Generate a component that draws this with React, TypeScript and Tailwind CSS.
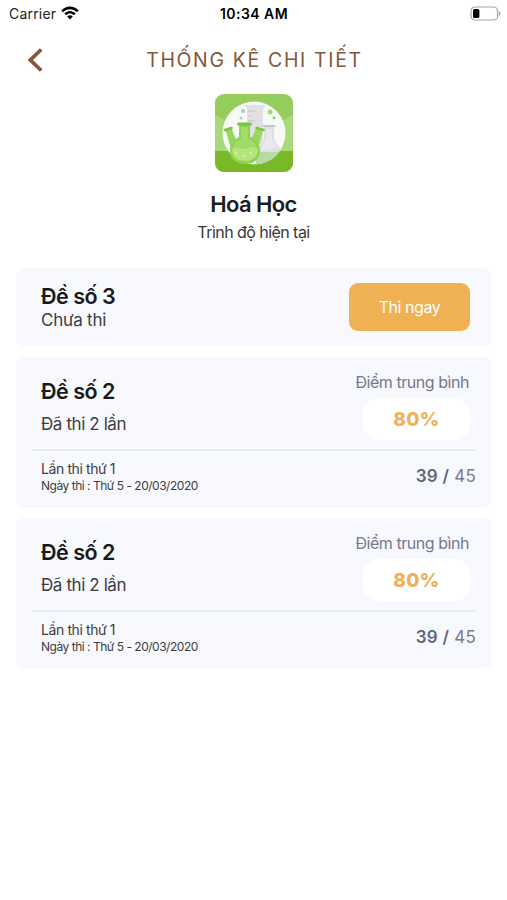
import React from 'react';

interface Attempt {
  id: number;
  name: string;
  date: string;
  score: number;
  total: number;
}

interface Exam {
  id: number;
  title: string;
  status: string;
  average?: number;
  attempts: Attempt[];
}

const attempt: Attempt = { id: 1, name: 'Lần thi thứ 1', date: 'Ngày thi : Thứ 5 - 20/03/2020', score: 39, total: 45 };

const exams: Exam[] = [
  { id: 1, title: 'Đề số 3', status: 'Chưa thi', attempts: [] },
  { id: 2, title: 'Đề số 2', status: 'Đã thi 2 lần', average: 80, attempts: [attempt] },
  { id: 3, title: 'Đề số 2', status: 'Đã thi 2 lần', average: 80, attempts: [attempt] },
];

function StatusBar() {
  return (
    <div className="grid h-[27px] grid-cols-3 items-center pl-[9px] pr-[6px] text-black">
      <div className="flex items-center gap-[5px]">
        <span className="text-[14px] leading-[18px] tracking-[0.2px] text-[#222]">Carrier</span>
        <svg className="-mt-[2px]" width="18" height="14" viewBox="0 0 18 14">
          <path d="M0.3 4.5C5.2 -0.8 12.8 -0.8 17.7 4.5L15.9 6.3C11.9 2.2 6.1 2.2 2.1 6.3Z" />
          <path d="M3.3 7.5C6.5 4.1 11.5 4.1 14.7 7.5L12.9 9.3C10.6 7 7.4 7 5.1 9.3Z" />
          <path d="M6.2 10.4C7.8 8.8 10.2 8.8 11.8 10.4L9 13.4Z" />
        </svg>
      </div>
      <span className="-ml-[2px] justify-self-center whitespace-nowrap text-[14px] leading-[18px] font-semibold tracking-[0.45px]">10:34 AM</span>
      <svg className="-mt-[1px] justify-self-end" width="31" height="15" viewBox="0 0 31 15">
        <rect x="1" y="1" width="26.5" height="13" rx="3.8" fill="white" stroke="#a5a5a5" strokeWidth="1.2" />
        <rect x="3" y="3" width="6.4" height="9" rx="1.6" />
        <path d="M28.8 5.2C31 6 31 9 28.8 9.8Z" fill="#a5a5a5" />
      </svg>
    </div>
  );
}

function Header() {
  return (
    <header className="grid h-[66px] grid-cols-[60px_1fr_58px] items-center text-[#84583a]">
      <button className="pl-[27px]" aria-label="Quay lại">
        <svg width="17" height="26" viewBox="0 0 17 26" fill="none" stroke="currentColor" strokeWidth="3.8">
          <path d="M14.2 2.5L3.4 13L14.2 23.5" />
        </svg>
      </button>
      <h1 className="whitespace-nowrap text-center text-[19.5px] leading-6 font-normal tracking-[1.65px]">THỐNG KÊ CHI TIẾT</h1>
    </header>
  );
}

function ChemistryIcon() {
  return (
    <svg width="80" height="80" viewBox="0 0 80 80">
      <defs>
        <clipPath id="tile">
          <rect x="1" y="1" width="78" height="78" rx="9" />
        </clipPath>
        <clipPath id="disc">
          <circle cx="40" cy="40" r="31.5" />
        </clipPath>
      </defs>
      <g clipPath="url(#tile)">
        <rect width="80" height="80" fill="#94cd5b" />
        <path d="M0 22C4 22 8 26 12 28H68C72 26 76 22 80 22V58H0Z" fill="#a9d97b" />
        <rect y="58" width="80" height="22" fill="#79b927" />
        <circle cx="40" cy="40" r="31.5" fill="#f7f9f6" />
        <g clipPath="url(#disc)">
          {/* measuring cylinder */}
          <path d="M31 12H51V14L49 16V58H33V16Z" fill="#e1e1e3" />
          <path d="M34 18H41M34 23H38M34 28H41M34 33H38" stroke="#c3c4c8" strokeWidth="1" />
          {/* grey flask */}
          <path d="M50 33H60V44C60 50 69 56 69 63V72H42V60C42 55 50 50 50 44Z" fill="#dfdee2" />
          <path d="M52 36H58V45L64 55L46 58L52 47Z" fill="#e9e8ec" />
          <path d="M49.5 33H60.5" stroke="#c5c4c9" strokeWidth="2" strokeLinecap="round" />
          <path d="M42 59H70V72H42Z" fill="#b6dba3" />
          <circle cx="29" cy="18" r="2.2" fill="#bcc9d2" />
          <circle cx="27" cy="25" r="1.5" fill="#bcc9d2" />
          <circle cx="56" cy="19" r="2.5" fill="#a4d57f" />
          <circle cx="60" cy="25" r="1.4" fill="#92c96b" />
        </g>
        {/* three-neck flask */}
        <path d="M11.5 37L17.5 35L25 55L18 59Z" fill="#98d65c" />
        <path d="M42.5 35L49 37L43 60L34 53Z" fill="#98d65c" />
        <path d="M11 37L17.5 35" stroke="#7dc447" strokeWidth="2.6" strokeLinecap="round" />
        <path d="M42.5 35L49.5 37" stroke="#7dc447" strokeWidth="2.6" strokeLinecap="round" />
        <path d="M25 31H36V44C43 47 46 52 46 58C46 66 40 71 31 71C22 71 16 66 16 58C16 52 19 47 25 44Z" fill="#8fd352" />
        <path d="M27 34H34V46C40 48 43 52 43 56H19C19 51 22 48 27 46Z" fill="#a0dc67" />
        <path d="M18 56C24 53 28 58 34 55C38 53 41 54 44 56C44 64 39 68 31 68C23 68 18 64 18 56Z" fill="#b5e47a" />
        <path d="M24.5 31H36.5" stroke="#7bc445" strokeWidth="3" strokeLinecap="round" />
        <circle cx="22" cy="60" r="1.4" fill="#d9ec8e" />
        <circle cx="30" cy="63" r="1.6" fill="#d3ee94" />
        <circle cx="37" cy="60" r="1.6" fill="#d6eda0" />
      </g>
    </svg>
  );
}

function Subject() {
  return (
    <section className="flex h-[175px] flex-col items-center">
      <ChemistryIcon />
      <h2 className="mt-[18px] text-[22px] leading-[26px] font-semibold tracking-[-0.65px] text-[#1d1d1f]">Hoá Học</h2>
      <p className="mt-[4px] text-[16px] leading-[22px] tracking-[-0.55px] text-[#37373a]">Trình độ hiện tại</p>
    </section>
  );
}

function PendingCard({ exam }: { exam: Exam }) {
  return (
    <article className="mb-[11px] flex h-[78px] items-center justify-between rounded-[8px] bg-[#f8f9fe] pl-[25px] pr-[22px]">
      <div>
        <h3 className="text-[21.5px] leading-[26px] font-semibold tracking-[-0.5px] text-[#1a1a1c]">{exam.title}</h3>
        <p className="text-[17px] leading-[22px] tracking-[-0.25px] text-[#3d3d40]">{exam.status}</p>
      </div>
      <button className="h-[48px] w-[121px] rounded-[9px] bg-[#f0b155] text-[16px] tracking-[-0.45px] text-white">Thi ngay</button>
    </article>
  );
}

function ResultCard({ exam }: { exam: Exam }) {
  return (
    <article className="mb-[10px] flex h-[151px] flex-col rounded-[8px] bg-[#f8f9fe] px-[16px]">
      <div className="flex h-[94px] shrink-0 justify-between border-b-2 border-[#e9ebf2] pl-[9px] pr-[6px]">
        <div className="pt-[21px]">
          <h3 className="text-[21.5px] leading-[26px] font-semibold tracking-[-0.5px] text-[#1a1a1c]">{exam.title}</h3>
          <p className="mt-[9px] text-[17px] leading-[22px] tracking-[-0.4px] text-[#3d3d40]">{exam.status}</p>
        </div>
        <div className="flex flex-col items-end pt-[14px]">
          <span className="pr-[1px] text-[16px] leading-[22px] tracking-[-0.45px] text-[#747890]">Điểm trung bình</span>
          <span className="mt-[5px] flex h-[42px] w-[107px] items-center justify-center rounded-[16px] bg-white pt-[2px] text-[19px] font-extrabold tracking-[0.4px] text-[#f0b155]">
            {exam.average}%
          </span>
        </div>
      </div>
      {exam.attempts.map((item) => (
        <div key={item.id} className="flex items-center justify-between pl-[9px] pt-[9px]">
          <div>
            <p className="text-[14px] leading-[18px] tracking-[-0.4px] text-[#3d3d40]">{item.name}</p>
            <p className="text-[12px] leading-[16px] tracking-[-0.48px] text-[#3d3d40]">{item.date}</p>
          </div>
          <p className="-mt-[3px] text-[17px] leading-[22px] tracking-[0.25px] text-[#777b90]">
            <span className="font-semibold text-[#62667d]">{item.score} /</span> {item.total}
          </p>
        </div>
      ))}
    </article>
  );
}

export default function App() {
  return (
    <div className="h-[900px] w-[507px] overflow-hidden bg-white font-['Inter','Liberation_Sans',sans-serif]">
      <StatusBar />
      <Header />
      <Subject />
      <main className="pl-[16px] pr-[15px]">
        {exams.map((exam) =>
          exam.attempts.length > 0 ? <ResultCard key={exam.id} exam={exam} /> : <PendingCard key={exam.id} exam={exam} />
        )}
      </main>
    </div>
  );
}
